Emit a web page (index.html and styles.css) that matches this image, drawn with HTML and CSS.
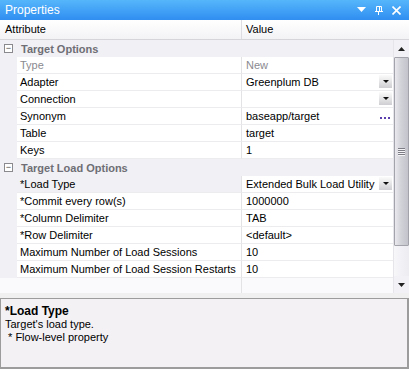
FILE: index.html
```html
<!DOCTYPE html>
<html>
<head>
<meta charset="utf-8">
<link rel="stylesheet" href="styles.css">
</head>
<body>
<div class="window">
  <div class="titlebar">
    <span class="title">Properties</span>
    <div class="tb-icons">
      <svg width="9" height="6" viewBox="0 0 9 6"><path d="M0 0H9L4.5 5Z" fill="#fff"/></svg>
      <svg width="8" height="9" viewBox="0 0 8 9"><path d="M1.5 0.5H6.5V5.5H1.5Z" fill="none" stroke="#fff"/><path d="M4.5 1V5" stroke="#fff"/><path d="M0 5.5H8M3.5 6V9" stroke="#fff"/></svg>
      <svg width="9" height="9" viewBox="0 0 9 9"><path d="M0.5 0.5L8.5 8.5M8.5 0.5L0.5 8.5" stroke="#fff" stroke-width="1.6"/></svg>
    </div>
  </div>
  <div class="header">
    <div class="h-attr">Attribute</div>
    <div class="h-val">Value</div>
  </div>
  <div class="gridarea">
    <div class="rows">
      <div class="cat"><span class="exp">−</span><span>Target Options</span></div>
      <div class="row dim"><div class="lbl">Type</div><div class="val">New</div></div>
      <div class="row"><div class="lbl">Adapter</div><div class="val"><span>Greenplum DB</span><span class="dd"></span></div></div>
      <div class="row"><div class="lbl">Connection</div><div class="val"><span></span><span class="dd"></span></div></div>
      <div class="row"><div class="lbl">Synonym</div><div class="val"><span>baseapp/target</span><span class="ell"><i></i><i></i><i></i></span></div></div>
      <div class="row"><div class="lbl">Table</div><div class="val">target</div></div>
      <div class="row"><div class="lbl">Keys</div><div class="val">1</div></div>
      <div class="cat"><span class="exp">−</span><span>Target Load Options</span></div>
      <div class="row sel"><div class="lbl">*Load Type</div><div class="val"><span>Extended Bulk Load Utility</span><span class="dd"></span></div></div>
      <div class="row"><div class="lbl">*Commit every row(s)</div><div class="val">1000000</div></div>
      <div class="row"><div class="lbl">*Column Delimiter</div><div class="val">TAB</div></div>
      <div class="row"><div class="lbl">*Row Delimiter</div><div class="val">&lt;default&gt;</div></div>
      <div class="row"><div class="lbl">Maximum Number of Load Sessions</div><div class="val">10</div></div>
      <div class="row"><div class="lbl">Maximum Number of Load Session Restarts</div><div class="val">10</div></div>
      <div class="filler"><div class="f-lbl"></div><div class="f-val"></div></div>
    </div>
    <div class="scrollbar">
      <div class="sb-btn"><svg width="7" height="4" viewBox="0 0 7 4"><path d="M0 4H7L3.5 0Z" fill="#222"/></svg></div>
      <div class="sb-thumb"><div class="grip"></div></div>
      <div class="sb-track"></div>
      <div class="sb-btn down"><svg width="7" height="4" viewBox="0 0 7 4"><path d="M0 0H7L3.5 4Z" fill="#222"/></svg></div>
    </div>
  </div>
  <div class="gap"></div>
  <div class="desc">
    <div class="d-title">*Load Type</div>
    <div>Target's load type.</div>
    <div>&nbsp;* Flow-level property</div>
  </div>
</div>
</body>
</html>
```
FILE: styles.css
```css
* { box-sizing: border-box; }
html, body { margin: 0; padding: 0; }
body {
  width: 409px;
  height: 369px;
  overflow: hidden;
  font-family: "Liberation Sans", Arial, sans-serif;
  font-size: 11px;
  color: #000;
  background: #f0f0f0;
}
.window { display: flex; flex-direction: column; height: 369px; }
.titlebar {
  height: 20px;
  background: linear-gradient(#56b6fb, #2f8ef1);
  display: flex;
  align-items: center;
  justify-content: space-between;
  padding: 0 8px 0 5px;
  color: #fff;
  font-size: 12px;
}
.tb-icons { display: flex; align-items: center; gap: 9px; }
.header {
  height: 20px;
  display: flex;
  background: linear-gradient(#ffffff, #f3f3f6);
  border-bottom: 1px solid #d6d6da;
}
.h-attr { width: 242px; padding: 3px 0 0 5px; border-right: 1px solid #dedee2; }
.h-val { flex: 1; padding: 3px 0 0 4px; }
.gridarea { display: flex; height: 253px; }
.rows { width: 393px; display: flex; flex-direction: column; background: #f1f0f4; }
.cat {
  height: 17px;
  display: flex;
  align-items: center;
  font-weight: bold;
  color: #6e6e74;
  background: #f1f0f4;
}
.exp {
  width: 9px; height: 9px;
  border: 1px solid #8a8a8e;
  margin: 0 8px 0 4px;
  font-size: 9px;
  line-height: 6px;
  text-align: center;
  color: #444;
  font-weight: normal;
  background: #fff;
}
.row { height: 17px; display: flex; margin-left: 17px; }
.lbl, .val {
  background: #fff;
  border-bottom: 1px solid #ececef;
  padding: 2px 0 0 3px;
  white-space: nowrap;
  overflow: hidden;
}
.lbl { width: 225px; border-right: 1px solid #e3e3e6; }
.val { flex: 1; display: flex; justify-content: space-between; padding-left: 4px; }
.dim .lbl, .dim .val { color: #8a8a90; }
.sel .lbl { background: #f1f0f4; }
.dd {
  width: 13px; height: 13px;
  margin: -1px 1px 0 0;
  background: linear-gradient(#fbfbfb, #cfcfd3);
  position: relative;
}
.dd::after {
  content: "";
  position: absolute;
  left: 4px; top: 5px;
  border-left: 3px solid transparent;
  border-right: 3px solid transparent;
  border-top: 3px solid #111;
}
.ell { display: flex; gap: 2px; align-items: flex-end; padding: 0 3px 5px 0; }
.ell i { width: 2px; height: 2px; background: #5b3fae; }
.filler { flex: 1; display: flex; background: #fafafc; }
.f-lbl { width: 242px; border-right: 1px solid #e3e3e6; }
.f-val { flex: 1; }
.scrollbar {
  width: 16px;
  display: flex;
  flex-direction: column;
  background: #f2f2f6;
  border-left: 1px solid #e6e6ea;
}
.sb-btn { height: 17px; display: flex; align-items: center; justify-content: center; }
.sb-thumb {
  height: 189px;
  border: 1px solid #a3a3ab;
  border-radius: 1px;
  background: linear-gradient(90deg, #e9e9ee, #d2d2d9 45%, #c3c3cb);
  display: flex;
  justify-content: center;
  padding-top: 90px;
}
.grip {
  width: 7px; height: 8px;
  background: repeating-linear-gradient(#7d7d86 0 1px, #f4f4f7 1px 2px);
}
.sb-track { flex: 1; background: linear-gradient(90deg, #f7f7fa, #ececf1); }
.gap { height: 5px; background: #f0f0f0; }
.desc {
  flex: 1;
  border: 1px solid #9c9c9c;
  border-right-width: 2px;
  border-bottom-width: 2px;
  background: #f3f1f4;
  padding: 6px 0 0 4px;
  line-height: 13px;
}
.d-title { font-weight: bold; font-size: 12px; }
```
